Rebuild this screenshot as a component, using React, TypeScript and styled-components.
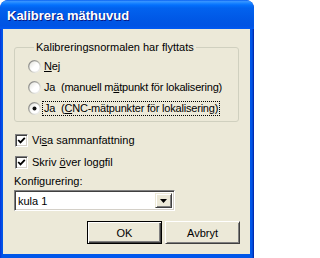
import React from "react";
import styled, { createGlobalStyle } from "styled-components";

const Global = createGlobalStyle`
  html, body { margin: 0; padding: 0; background: #ffffff; }
  body { font-family: "Liberation Sans", Arial, sans-serif; font-size: 11px; color: #000; }
`;

const Window = styled.div`
  width: 254px;
  height: 258px;
  box-sizing: border-box;
  display: flex;
  flex-direction: column;
  border-radius: 8px 8px 0 0;
  background: linear-gradient(to right, #0831d9 0px, #0056e8 2px, #0058ee 50%, #0056e8 calc(100% - 2px), #001ea0 100%);
  overflow: hidden;
`;

const TitleBar = styled.div`
  height: 29px;
  flex: none;
  display: flex;
  align-items: center;
  padding-left: 7px;
  padding-top: 2px;
  border-radius: 8px 8px 0 0;
  background: linear-gradient(
    to bottom,
    #0058ee 0%,
    #3a93ff 4%,
    #288eff 8%,
    #127dff 13%,
    #036ffc 18%,
    #0262ee 28%,
    #0057e5 70%,
    #0054e3 88%,
    #0055eb 94%,
    #005bf5 100%
  );
  color: #ffffff;
  font-family: "Liberation Sans", Arial, sans-serif;
  font-weight: bold;
  font-size: 13px;
  text-shadow: 1px 1px 0 #0a1883;
  box-sizing: border-box;
`;

const Client = styled.div`
  flex: 1;
  margin: 0 4px 4px 3px;
  background: #ece9d8;
  padding: 0 10px 10px 11px;
  display: flex;
  flex-direction: column;
  box-sizing: border-box;
`;

const Group = styled.fieldset`
  margin: 12px 0 0 0;
  width: 225px;
  box-sizing: border-box;
  border: 1px solid #d0d0bf;
  border-radius: 3px;
  padding: 2px 0 3px 13px;
  min-width: 0;
`;

const Legend = styled.legend`
  margin-left: 6px;
  padding: 0 2px;
  line-height: 13px;
  color: #000;
`;

const OptionRow = styled.div<{ $gap?: number }>`
  height: 20px;
  display: flex;
  align-items: center;
  margin-top: ${(p) => p.$gap ?? 0}px;
`;

const Label = styled.span<{ $focus?: boolean }>`
  white-space: pre;
  line-height: 13px;
  letter-spacing: -0.2px;
  padding: 0 1px;
  margin-left: ${(p) => (p.$focus ? 1 : 1)}px;
  border: 1px dotted ${(p) => (p.$focus ? "#000" : "transparent")};
`;

const U = styled.span`
  text-decoration: underline;
  text-underline-offset: 1px;
`;

const CheckRow = styled.div<{ $gap: number }>`
  height: 20px;
  display: flex;
  align-items: center;
  margin-top: ${(p) => p.$gap}px;
  padding-left: 1px;
`;

const CheckBox = styled.span`
  width: 13px;
  height: 13px;
  box-sizing: border-box;
  flex: none;
  background: #ffffff;
  border-top: 1px solid #808080;
  border-left: 1px solid #808080;
  border-bottom: 1px solid #ffffff;
  border-right: 1px solid #ffffff;
  box-shadow: inset 1px 1px 0 #404040, inset -1px -1px 0 #d4d0c8;
  display: flex;
  align-items: center;
  justify-content: center;
`;

const CheckText = styled.span`
  margin-left: 4px;
  line-height: 13px;
  white-space: pre;
`;

const FieldLabel = styled.div`
  margin-top: 2px;
  line-height: 14px;
  height: 14px;
`;

const Combo = styled.div`
  margin-top: 2px;
  width: 161px;
  height: 21px;
  box-sizing: border-box;
  background: #ffffff;
  border-top: 1px solid #808080;
  border-left: 1px solid #808080;
  border-bottom: 1px solid #ffffff;
  border-right: 1px solid #ffffff;
  box-shadow: inset 1px 1px 0 #404040, inset -1px -1px 0 #d4d0c8;
  display: flex;
  align-items: stretch;
  padding: 2px;
`;

const ComboText = styled.div`
  flex: 1;
  display: flex;
  align-items: center;
  padding-left: 1px;
`;

const ComboButton = styled.div`
  width: 17px;
  flex: none;
  box-sizing: border-box;
  background: #ece9d8;
  border-top: 1px solid #ece9d8;
  border-left: 1px solid #ece9d8;
  border-bottom: 1px solid #404040;
  border-right: 1px solid #404040;
  box-shadow: inset 1px 1px 0 #ffffff, inset -1px -1px 0 #808080;
  display: flex;
  align-items: center;
  justify-content: center;
`;

const ButtonRow = styled.div`
  margin-top: 10px;
  display: flex;
  justify-content: flex-end;
  gap: 3px;
`;

const Button = styled.div<{ $default?: boolean }>`
  width: 75px;
  height: 23px;
  box-sizing: border-box;
  background: #ece9d8;
  display: flex;
  align-items: center;
  justify-content: center;
  border: 1px solid;
  border-color: ${(p) => (p.$default ? "#000000" : "#ffffff #404040 #404040 #ffffff")};
  box-shadow: ${(p) =>
    p.$default
      ? "inset 1px 1px 0 #ffffff, inset -1px -1px 0 #404040, inset -2px -2px 0 #808080"
      : "inset 1px 1px 0 #ece9d8, inset -1px -1px 0 #808080"};
`;

const Radio = ({ checked }: { checked?: boolean }) => (
  <svg width="13" height="13" viewBox="0 0 13 13" style={{ flex: "none" }}>
    <defs>
      <linearGradient id="rstroke" x1="0" y1="0" x2="1" y2="1">
        <stop offset="0" stopColor="#7a7a7a" />
        <stop offset="0.5" stopColor="#b8b8b0" />
        <stop offset="1" stopColor="#ffffff" />
      </linearGradient>
      <linearGradient id="rfill" x1="0" y1="0" x2="1" y2="1">
        <stop offset="0" stopColor="#dcdcd4" />
        <stop offset="0.5" stopColor="#ffffff" />
        <stop offset="1" stopColor="#ffffff" />
      </linearGradient>
    </defs>
    <circle cx="6.5" cy="6.5" r="5.8" fill="url(#rfill)" stroke="url(#rstroke)" strokeWidth="1.3" />
    {checked && <circle cx="6.5" cy="6.5" r="2" fill="#111" />}
  </svg>
);

const Check = () => (
  <svg width="9" height="9" viewBox="0 0 9 9">
    <polyline points="1.2,4 3.5,6.4 7.8,1.8" fill="none" stroke="#000" strokeWidth="1.8" />
  </svg>
);

const Arrow = () => (
  <svg width="7" height="4" viewBox="0 0 7 4">
    <polygon points="0,0 7,0 3.5,4" fill="#000" />
  </svg>
);

export default function App() {
  return (
    <>
      <Global />
      <Window>
        <TitleBar>Kalibrera mäthuvud</TitleBar>
        <Client>
          <Group>
            <Legend>Kalibreringsnormalen har flyttats</Legend>
            <OptionRow>
              <Radio />
              <Label>
                <U>N</U>ej
              </Label>
            </OptionRow>
            <OptionRow $gap={1}>
              <Radio />
              <Label>
                Ja  (manuell m<U>ä</U>tpunkt för lokalisering)
              </Label>
            </OptionRow>
            <OptionRow $gap={1}>
              <Radio checked />
              <Label $focus>
                Ja  (<U>C</U>NC-mätpunkter för lokalisering)
              </Label>
            </OptionRow>
          </Group>
          <CheckRow $gap={8}>
            <CheckBox>
              <Check />
            </CheckBox>
            <CheckText>
              Vi<U>s</U>a sammanfattning
            </CheckText>
          </CheckRow>
          <CheckRow $gap={2}>
            <CheckBox>
              <Check />
            </CheckBox>
            <CheckText>
              Skriv <U>ö</U>ver loggfil
            </CheckText>
          </CheckRow>
          <FieldLabel>Konfigurering:</FieldLabel>
          <Combo>
            <ComboText>kula 1</ComboText>
            <ComboButton>
              <Arrow />
            </ComboButton>
          </Combo>
          <ButtonRow>
            <Button $default>OK</Button>
            <Button>Avbryt</Button>
          </ButtonRow>
        </Client>
      </Window>
    </>
  );
}
